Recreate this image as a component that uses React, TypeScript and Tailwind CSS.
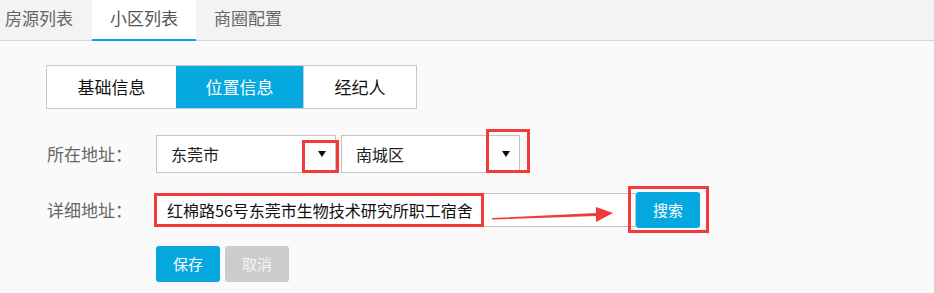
const FONT = '"Noto Sans CJK SC", "Noto Sans", sans-serif';

function Caret() {
  return (
    <svg width="8" height="6" viewBox="0 0 8 6" className="shrink-0">
      <polygon points="0,0 8,0 4,6" fill="#111" />
    </svg>
  );
}

function Select({ value, width }: { value: string; width: string }) {
  return (
    <div className={`flex items-center justify-between h-[38px] ${width} bg-white border border-[#c4c4c4] pl-[14px] pr-[9px] text-[16px] text-[#222]`}>
      <span>{value}</span>
      <Caret />
    </div>
  );
}

export default function App() {
  const topTabs = ['房源列表', '小区列表', '商圈配置'];
  const segs = [
    { label: '基础信息', w: 'w-[129px]' },
    { label: '位置信息', w: 'w-[127px]' },
    { label: '经纪人', w: 'w-[113px]' },
  ];

  return (
    <div className="relative w-[934px] h-[293px] bg-[#fafafa] overflow-hidden" style={{ fontFamily: FONT }}>
      {/* top tabs */}
      <div className="flex h-[41px] bg-[#f3f3f3] border-b border-[#d6d6d6]">
        {topTabs.map((t, i) => (
          <div
            key={t}
            className={
              i === 1
                ? 'h-[41px] px-[18px] bg-white border-b-2 border-[#06a5df] text-[17px] leading-[36px] text-[#555]'
                : i === 0
                ? 'h-[40px] pl-[5px] pr-[19px] text-[17px] leading-[36px] text-[#666]'
                : 'h-[40px] px-[18px] text-[17px] leading-[36px] text-[#666]'
            }
          >
            {t}
          </div>
        ))}
      </div>

      <div className="pl-[46px] pt-[24px]">
        {/* segmented */}
        <div className="flex h-[44px] w-fit border border-[#c8c8c8] bg-white">
          {segs.map((s, i) => (
            <div
              key={s.label}
              className={`${s.w} flex items-center justify-center text-[17px] ${
                i === 1 ? 'bg-[#06a8e0] text-white' : 'text-[#111]'
              } ${i === 2 ? 'border-l border-[#c8c8c8]' : ''}`}
            >
              {s.label}
            </div>
          ))}
        </div>

        {/* address row */}
        <div className="flex items-center mt-[26px] h-[38px]">
          <div className="w-[110px] pl-px text-[17px] text-[#666]">所在地址：</div>
          <div className="flex gap-[5px]">
            <Select value="东莞市" width="w-[180px]" />
            <Select value="南城区" width="w-[179px]" />
          </div>
        </div>

        {/* detail row */}
        <div className="flex items-center mt-[19px] h-[36px]">
          <div className="w-[110px] pl-px text-[17px] text-[#666]">详细地址：</div>
          <div className="flex items-center">
            <div className="flex items-center h-[34px] w-[480px] bg-white border border-[#c4c4c4] pl-[10px] text-[16px] text-[#111] whitespace-nowrap">
              红棉路56号东莞市生物技术研究所职工宿舍
            </div>
            <button className="h-[36px] w-[64px] rounded-[3px] bg-[#06a8e0] text-white text-[15px]">搜索</button>
          </div>
        </div>

        {/* actions */}
        <div className="flex gap-[5px] mt-[18px] ml-[110px]">
          <button className="h-[36px] w-[64px] rounded-[3px] bg-[#06a8e0] text-white text-[15px]">保存</button>
          <button className="h-[36px] w-[64px] rounded-[3px] bg-[#cccccc] text-[#f4f4f4] text-[15px]">取消</button>
        </div>
      </div>

      {/* red annotations */}
      <div className="absolute left-[302px] top-[140px] w-[37px] h-[33px] border-[3px] border-[#f23a3a]" />
      <div className="absolute left-[486px] top-[129px] w-[44px] h-[44px] border-[3px] border-[#f23a3a]" />
      <div className="absolute left-[154px] top-[193px] w-[330px] h-[34px] border-[3px] border-[#f23a3a]" />
      <div className="absolute left-[628px] top-[186px] w-[81px] h-[47px] border-[3px] border-[#f23a3a]" />
      <svg className="absolute left-[490px] top-[204px]" width="126" height="22" viewBox="0 0 126 22">
        <polygon points="2,14 106,9 106,3 123,9 106,18 106,12 2,15.5" fill="#f23a3a" />
      </svg>
    </div>
  );
}
